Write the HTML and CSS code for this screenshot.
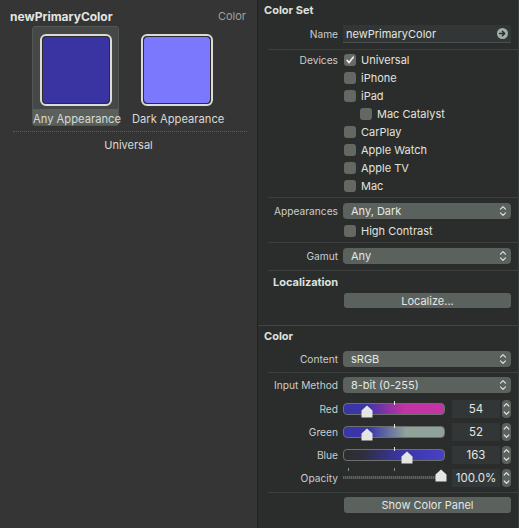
FILE: index.html
```html
<!DOCTYPE html>
<html>
<head>
<meta charset="utf-8">
<link rel="stylesheet" href="styles.css">
</head>
<body>
<div class="app">
  <div class="left">
    <div class="left-head"><span class="title">newPrimaryColor</span><span class="kind">Color</span></div>
    <div class="swatches">
      <div class="swatch-item selected">
        <div class="swatch"><div class="fill any"></div></div>
        <div class="swatch-label">Any Appearance</div>
      </div>
      <div class="swatch-item">
        <div class="swatch"><div class="fill dark"></div></div>
        <div class="swatch-label">Dark Appearance</div>
      </div>
    </div>
    <div class="dots"></div>
    <div class="universal">Universal</div>
  </div>
  <div class="divider"></div>
  <div class="right">
    <div class="sec-title">Color Set</div>
    <div class="row row-name">
      <div class="label">Name</div>
      <div class="textfield">newPrimaryColor
        <svg class="goto" width="11" height="11" viewBox="0 0 11 11"><circle cx="5.5" cy="5.5" r="5.5" fill="#a3aea8"/><path d="M2.6 5.5H7.6M5.4 3.2L7.7 5.5L5.4 7.8" stroke="#2b2e2e" stroke-width="1.5" fill="none" stroke-linecap="round" stroke-linejoin="round"/></svg>
      </div>
    </div>
    <div class="sep sep-a"></div>
    <div class="row check-row">
      <div class="label">Devices</div>
      <div class="check"><span class="box checked"><svg width="12" height="12" viewBox="0 0 12 12"><path d="M3 6.3L5.1 8.6L9.2 3.2" stroke="#f0f2ef" stroke-width="1.6" fill="none" stroke-linecap="round" stroke-linejoin="round"/></svg></span>Universal</div>
    </div>
    <div class="row check-row"><div class="label"></div><div class="check"><span class="box"></span>iPhone</div></div>
    <div class="row check-row"><div class="label"></div><div class="check"><span class="box"></span>iPad</div></div>
    <div class="row check-row"><div class="label"></div><div class="check indent"><span class="box"></span>Mac Catalyst</div></div>
    <div class="row check-row"><div class="label"></div><div class="check"><span class="box"></span>CarPlay</div></div>
    <div class="row check-row"><div class="label"></div><div class="check"><span class="box"></span>Apple Watch</div></div>
    <div class="row check-row"><div class="label"></div><div class="check"><span class="box"></span>Apple TV</div></div>
    <div class="row check-row"><div class="label"></div><div class="check"><span class="box"></span>Mac</div></div>
    <div class="sep sep-b"></div>
    <div class="row pop-row">
      <div class="label">Appearances</div>
      <div class="popup">Any, Dark<svg class="chev" width="8" height="12" viewBox="0 0 8 12"><path d="M1.5 4.2L4 1.7L6.5 4.2M1.5 7.8L4 10.3L6.5 7.8" stroke="#dfe3df" stroke-width="1.2" fill="none" stroke-linecap="round" stroke-linejoin="round"/></svg></div>
    </div>
    <div class="row check-row hc"><div class="label"></div><div class="check"><span class="box"></span>High Contrast</div></div>
    <div class="sep sep-c"></div>
    <div class="row pop-row">
      <div class="label">Gamut</div>
      <div class="popup">Any<svg class="chev" width="8" height="12" viewBox="0 0 8 12"><path d="M1.5 4.2L4 1.7L6.5 4.2M1.5 7.8L4 10.3L6.5 7.8" stroke="#dfe3df" stroke-width="1.2" fill="none" stroke-linecap="round" stroke-linejoin="round"/></svg></div>
    </div>
    <div class="sep sep-d"></div>
    <div class="sub-title">Localization</div>
    <div class="row btn-row">
      <div class="label"></div>
      <div class="button">Localize...</div>
    </div>
    <div class="section-line"></div>
    <div class="sec-title">Color</div>
    <div class="row pop-row content-row">
      <div class="label">Content</div>
      <div class="popup">sRGB<svg class="chev" width="8" height="12" viewBox="0 0 8 12"><path d="M1.5 4.2L4 1.7L6.5 4.2M1.5 7.8L4 10.3L6.5 7.8" stroke="#dfe3df" stroke-width="1.2" fill="none" stroke-linecap="round" stroke-linejoin="round"/></svg></div>
    </div>
    <div class="sep sep-e"></div>
    <div class="row pop-row">
      <div class="label">Input Method</div>
      <div class="popup">8-bit (0-255)<svg class="chev" width="8" height="12" viewBox="0 0 8 12"><path d="M1.5 4.2L4 1.7L6.5 4.2M1.5 7.8L4 10.3L6.5 7.8" stroke="#dfe3df" stroke-width="1.2" fill="none" stroke-linecap="round" stroke-linejoin="round"/></svg></div>
    </div>
    <div class="sliders">
      <div class="row slider-row">
        <div class="label">Red</div>
        <div class="slider-ctl">
          <div class="track red"><span class="tick"></span><svg class="knob" style="left:17px" width="12" height="13" viewBox="0 0 12 13"><path d="M6 0.5L11.5 5.5V12.5H0.5V5.5Z" fill="#e4e6e3"/></svg></div>
          <div class="value">54</div>
          <div class="stepper"><svg width="9" height="18" viewBox="0 0 9 18"><path d="M2.2 6L4.5 3.7L6.8 6M2.2 12L4.5 14.3L6.8 12" stroke="#dfe3df" stroke-width="1.2" fill="none" stroke-linecap="round" stroke-linejoin="round"/></svg></div>
        </div>
      </div>
      <div class="row slider-row">
        <div class="label">Green</div>
        <div class="slider-ctl">
          <div class="track green"><span class="tick"></span><svg class="knob" style="left:17px" width="12" height="13" viewBox="0 0 12 13"><path d="M6 0.5L11.5 5.5V12.5H0.5V5.5Z" fill="#e4e6e3"/></svg></div>
          <div class="value">52</div>
          <div class="stepper"><svg width="9" height="18" viewBox="0 0 9 18"><path d="M2.2 6L4.5 3.7L6.8 6M2.2 12L4.5 14.3L6.8 12" stroke="#dfe3df" stroke-width="1.2" fill="none" stroke-linecap="round" stroke-linejoin="round"/></svg></div>
        </div>
      </div>
      <div class="row slider-row">
        <div class="label">Blue</div>
        <div class="slider-ctl">
          <div class="track blue"><span class="tick"></span><svg class="knob" style="left:57px" width="12" height="13" viewBox="0 0 12 13"><path d="M6 0.5L11.5 5.5V12.5H0.5V5.5Z" fill="#e4e6e3"/></svg></div>
          <div class="value">163</div>
          <div class="stepper"><svg width="9" height="18" viewBox="0 0 9 18"><path d="M2.2 6L4.5 3.7L6.8 6M2.2 12L4.5 14.3L6.8 12" stroke="#dfe3df" stroke-width="1.2" fill="none" stroke-linecap="round" stroke-linejoin="round"/></svg></div>
        </div>
      </div>
      <div class="row slider-row">
        <div class="label">Opacity</div>
        <div class="slider-ctl">
          <div class="track opacity"><span class="otick t1"></span><span class="otick t2"></span><svg class="knob" style="left:92px" width="12" height="13" viewBox="0 0 12 13"><path d="M6 0.5L11.5 5.5V12.5H0.5V5.5Z" fill="#e4e6e3"/></svg></div>
          <div class="value">100.0%</div>
          <div class="stepper"><svg width="9" height="18" viewBox="0 0 9 18"><path d="M2.2 6L4.5 3.7L6.8 6M2.2 12L4.5 14.3L6.8 12" stroke="#dfe3df" stroke-width="1.2" fill="none" stroke-linecap="round" stroke-linejoin="round"/></svg></div>
        </div>
      </div>
    </div>
    <div class="sep sep-f"></div>
    <div class="row btn-row2">
      <div class="label"></div>
      <div class="button">Show Color Panel</div>
    </div>
  </div>
</div>
</body>
</html>
```
FILE: styles.css
```css
* { box-sizing: border-box; }
html, body { margin: 0; padding: 0; }
body {
  width: 519px;
  height: 528px;
  overflow: hidden;
  font-family: Inter, "Noto Sans", "Liberation Sans", sans-serif;
  font-size: 11px;
  color: #dde1dd;
  background: #2b2d2d;
}
.app { display: flex; height: 528px; }

/* left pane */
.left { width: 257px; background: #353535; }
.left-head {
  height: 26px;
  padding: 6px 11px 0 10px;
  display: flex;
  justify-content: space-between;
  align-items: center;
}
.title { font-weight: 700; font-size: 12px; color: #e2e5e1; }
.kind { color: #9aa49c; font-size: 11px; }
.swatches { display: flex; padding-left: 32px; }
.swatch-item {
  width: 87px;
  height: 100px;
  display: flex;
  flex-direction: column;
  align-items: center;
  padding-top: 7px;
  border-radius: 3px;
  border: 1px solid transparent;
}
.swatch-item + .swatch-item { margin-left: 14px; width: 88px; }
.swatch-item.selected { background: #454846; border-color: #535753; }
.swatch {
  width: 72px;
  height: 72px;
  border: 2px solid #dadcd8;
  border-radius: 6px;
  padding: 1px;
  background: #2c2d2c;
}
.fill { width: 100%; height: 100%; border-radius: 4px; }
.fill.any { background: #3a34a2; }
.fill.dark { background: #7b78fd; }
.swatch-label {
  margin-top: 3px;
  align-self: stretch;
  height: 16px;
  line-height: 20px;
  text-align: center;
  white-space: nowrap;
  color: #d5d9d5;
  margin-left: -2px;
  margin-right: -2px;
  font-size: 11.2px;
}
.selected .swatch-label { background: #5b605b; margin-left: 0; margin-right: 0; }
.dots { margin: 5px 10px 0 13px; border-top: 1px dotted #5c5e5c; }
.universal { height: 26px; line-height: 26px; text-align: center; color: #d8dbd7; }

.divider { width: 1px; background: #202121; }

/* right pane */
.right { width: 261px; background: #2b2d2d; border-right: 1px solid #3a3e3d; }
.sec-title { height: 20px; line-height: 20px; padding-left: 6px; font-weight: 700; color: #dde1dd; }
.sub-title { height: 20px; line-height: 20px; padding-left: 15px; font-weight: 700; margin-top: 1px; color: #dde1dd; }
.row {
  display: grid;
  grid-template-columns: 80px 1fr;
  column-gap: 5px;
  align-items: center;
  padding-right: 7px;
}
.label { text-align: right; color: #c9cdc9; white-space: nowrap; font-size: 10.2px; }
.row-name { height: 18px; margin-top: 5px; }
.textfield {
  height: 18px;
  background: #323636;
  border-bottom: 1px solid #4a504d;
  padding-left: 3px;
  display: flex;
  align-items: center;
  justify-content: space-between;
  padding-right: 3px;
  font-size: 11px;
  color: #e2e5e1;
}
.sep { height: 1px; background: #3b3f3e; margin-left: 10px; }
.sep-a { margin-top: 6px; margin-bottom: 1px; }
.sep-b { margin-top: 2px; margin-bottom: 5px; }
.sep-c { margin-top: 2px; margin-bottom: 5px; }
.sep-d { margin-top: 6px; }
.sep-e { margin-top: 5px; margin-bottom: 4px; }
.sep-f { margin-top: 3px; margin-bottom: 4px; }
.check-row { height: 18px; }
.hc { margin-top: 3px; }
.check { display: flex; align-items: center; gap: 5px; padding-left: 1px; font-size: 11px; color: #e0e3df; }
.check.indent { padding-left: 17px; }
.box {
  width: 12px;
  height: 12px;
  border-radius: 3px;
  background: #636863;
  display: inline-flex;
}
.box.checked { background: #666b66; }
.pop-row { height: 16px; }
.popup {
  height: 16px;
  background: #5b615c;
  border-radius: 4px;
  padding-left: 8px;
  padding-right: 4px;
  display: flex;
  align-items: center;
  justify-content: space-between;
  font-size: 11px;
  color: #e4e7e3;
}
.chev { display: block; }
.btn-row { height: 15px; margin-top: 1px; }
.button {
  height: 100%;
  background: #5b615c;
  border-radius: 3px;
  margin-left: 1px;
  display: flex;
  align-items: center;
  justify-content: center;
  font-size: 11px;
  color: #e4e7e3;
}
.section-line { height: 1px; background: #404443; margin-top: 17px; }
.content-row { margin-top: 5px; }
.sliders { margin-top: 4px; }
.slider-row { height: 23px; }
.slider-ctl { display: flex; align-items: center; }
.track {
  position: relative;
  width: 102px;
  height: 12px;
  border-radius: 4px;
  border: 1px solid #6c716d;
  margin-right: 7px;
}
.track.red { background: linear-gradient(90deg, #3935a7 0%, #3a35a8 22%, #c233a3 60%, #c434a4 100%); }
.track.green { background: linear-gradient(90deg, #3935a7 0%, #3a35a8 25%, #8fa39b 62%, #8fa39b 100%); }
.track.blue { background: linear-gradient(90deg, #2b2d2d 0%, #2f2f40 20%, #3a35a4 55%, #4841c6 100%); }
.track.opacity {
  border: none;
  height: 3px;
  background: repeating-linear-gradient(90deg, #5d615e 0 1px, #3f4341 1px 2px);
  border-radius: 0;
}
.tick { position: absolute; left: 50px; top: -3px; width: 1px; height: 4px; background: #e6e8e5; }
.otick { position: absolute; top: -8px; width: 1px; height: 3px; background: #8c918d; }
.otick.t1 { left: 5px; }
.otick.t2 { left: 51px; }
.knob { position: absolute; top: 1px; }
.track.opacity .knob { top: -7px; }
.value {
  width: 48px;
  height: 18px;
  background: #323636;
  display: flex;
  align-items: center;
  justify-content: center;
  margin-right: 2px;
  font-size: 11.5px;
  color: #e4e7e3;
}
.stepper {
  width: 9px;
  height: 18px;
  background: #5b615c;
  border-radius: 4px;
}
.stepper svg { display: block; }
.btn-row2 { height: 16px; }
```
